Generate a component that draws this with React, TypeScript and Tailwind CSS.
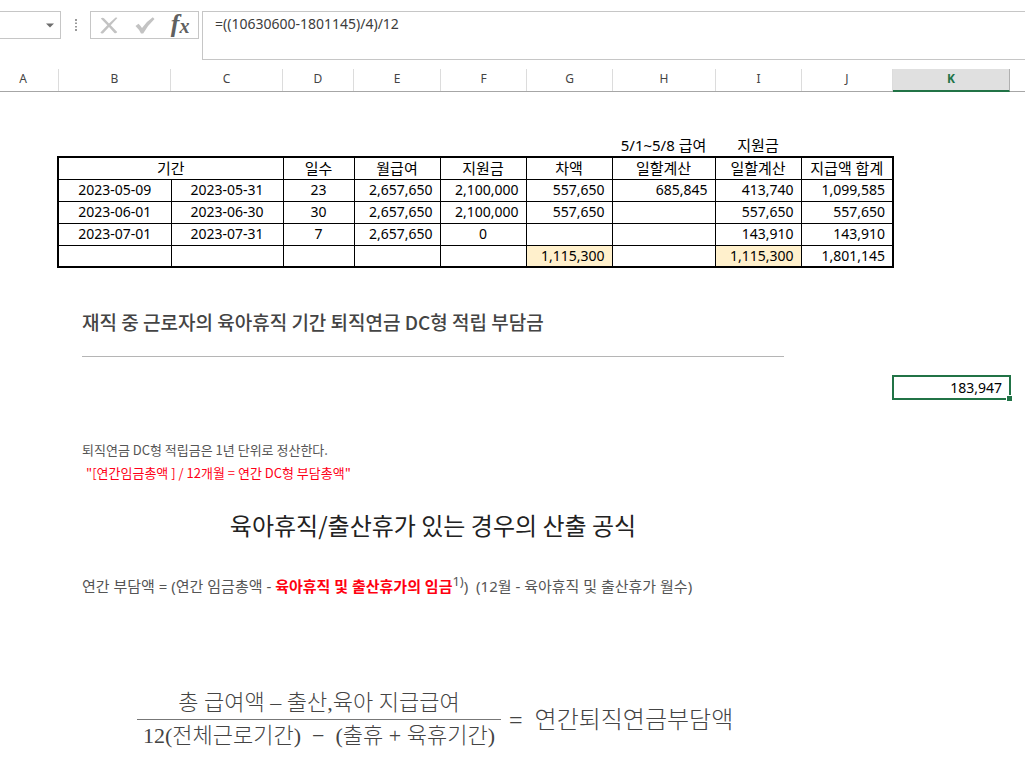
import React from "react";

type Column = { name: string; width: string };

const columns: Column[] = [
  { name: "A", width: "w-[59px] pr-3" },
  { name: "B", width: "w-[112px]" },
  { name: "C", width: "w-[112px]" },
  { name: "D", width: "w-[71px]" },
  { name: "E", width: "w-[87px]" },
  { name: "F", width: "w-[86px]" },
  { name: "G", width: "w-[86px]" },
  { name: "H", width: "w-[103px]" },
  { name: "I", width: "w-[86px]" },
  { name: "J", width: "w-[91px]" },
];

const rows: string[][] = [
  ["2023-05-09", "2023-05-31", "23", "2,657,650", "2,100,000", "557,650", "685,845", "413,740", "1,099,585"],
  ["2023-06-01", "2023-06-30", "30", "2,657,650", "2,100,000", "557,650", "", "557,650", "557,650"],
  ["2023-07-01", "2023-07-31", "7", "2,657,650", "0", "", "", "143,910", "143,910"],
  ["", "", "", "", "", "1,115,300", "", "1,115,300", "1,801,145"],
];

const headings = ["일수", "월급여", "지원금", "차액", "일할계산", "일할계산", "지급액 합계"];

function cellClass(value: string, row: number, col: number) {
  const align = col < 3 || value === "0" ? "text-center" : "text-right pr-[7px]";
  const fill = row === 3 && (col === 5 || col === 7) ? "bg-[#fff0cc]" : "";
  return `border border-black ${align} ${fill}`;
}

function FormulaBar() {
  return (
    <div className="flex items-start pt-[11px]">
      <div className="flex h-7 w-[61px] shrink-0 items-center border border-l-0 border-[#c6c6c6]">
        <input aria-label="이름 상자" className="min-w-0 flex-1 outline-none" />
        <button aria-label="이름 목록" className="flex h-full w-5 items-center justify-center">
          <svg width="8" height="5" viewBox="0 0 8 5" fill="#6d6d6d">
            <path d="M0 0.5h8L4 4.5z" />
          </svg>
        </button>
      </div>
      <div className="flex h-7 w-[29px] shrink-0 items-center justify-center">
        <svg width="2" height="12" viewBox="0 0 2 12" fill="#9a9a9a">
          <path d="M0 0h2v2H0zM0 3.5h2v1.500H0zM0 7h2v1.500H0zM0 10h2v2H0z" />
        </svg>
      </div>
      <div className="flex h-7 w-[109px] shrink-0 items-center border border-[#c6c6c6]">
        <button aria-label="취소" className="flex h-full w-9 items-center justify-center">
          <svg width="18" height="17" viewBox="0 0 18 17" fill="#c3c3c3">
            <path d="M0.800 1.500Q2.500 0 4.200 1.400L9 6.500L15.600 0.500Q17 0.100 17.400 1L10.700 8.200L17.200 15Q16 16.800 14.400 16L9 10.100L3.200 16.200Q1.300 17 0.400 15.600L7.300 8.200Z" />
          </svg>
        </button>
        <button aria-label="입력" className="flex h-full w-9 items-center justify-center">
          <svg width="20" height="17" viewBox="0 0 20 17" fill="#c3c3c3">
            <path d="M0.500 9L3.500 6.800Q5.500 8.500 7 11Q11.500 4.500 17.800 0.300L19.500 2Q13 8 8.200 16.500L6 16.500Q4 12.300 0.500 9Z" />
          </svg>
        </button>
        <button
          aria-label="함수 삽입"
          className="flex h-full w-9 items-center justify-center pb-0.5 font-['Liberation_Serif',serif] text-[#606060] italic"
        >
          <span className="text-[26px] leading-6 font-bold">f</span>
          <span className="pt-1 text-xl leading-6 font-bold">x</span>
        </button>
      </div>
      <textarea
        aria-label="수식 입력줄"
        defaultValue="=((10630600-1801145)/4)/12"
        className="ml-[3px] h-[49px] min-w-0 flex-1 resize-none overflow-hidden border border-r-0 border-[#c6c6c6] px-3 py-0.5 text-sm leading-5 text-[#3c3c3c] outline-none"
      />
    </div>
  );
}

function ColumnHeader() {
  return (
    <div className="mt-[9px] flex h-[23px] border-b border-[#a6a6a6] text-xs leading-[19px] text-[#444]">
      {columns.map((c) => (
        <div key={c.name} className={`shrink-0 border-r border-[#dcdcdc] text-center ${c.width}`}>
          {c.name}
        </div>
      ))}
      <div className="-mb-px w-[117px] shrink-0 border-r border-b-2 border-r-[#b0b0b0] border-b-[#217346] bg-[#e0e0e0] text-center font-bold text-[#217346]">
        K
      </div>
    </div>
  );
}

function PayTable() {
  return (
    <>
      <div className="mt-[42px] flex h-[22px] items-center text-[15px]">
        <div className="ml-[612px] w-[103px] text-center">5/1~5/8 급여</div>
        <div className="w-[86px] text-center">지원금</div>
      </div>
      <table className="ml-[57px] w-[837px] table-fixed border-collapse border-2 border-black text-sm leading-5">
        <colgroup>
          <col className="w-[113px]" />
          <col className="w-[112px]" />
          <col className="w-[71px]" />
          <col className="w-[86px]" />
          <col className="w-[86px]" />
          <col className="w-[86px]" />
          <col className="w-[103px]" />
          <col className="w-[86px]" />
          <col className="w-[92px]" />
        </colgroup>
        <thead>
          <tr className="h-[22px] text-[15px]">
            <th colSpan={2} className="border border-black font-normal">
              기간
            </th>
            {headings.map((h, i) => (
              <th key={i} className="border border-black font-normal whitespace-nowrap">
                {h}
              </th>
            ))}
          </tr>
        </thead>
        <tbody>
          {rows.map((row, r) => (
            <tr key={r} className="h-[22px]">
              {row.map((value, c) => (
                <td key={c} className={cellClass(value, r, c)}>
                  {value}
                </td>
              ))}
            </tr>
          ))}
        </tbody>
      </table>
    </>
  );
}

function Equation() {
  return (
    <div className="mt-[87px] ml-[55px] flex items-center font-['Liberation_Serif','Noto_Sans_CJK_KR',serif] text-[22px] leading-8 font-light whitespace-nowrap text-[#444]">
      <div className="text-center">
        <div className="border-b border-[#777] px-1">총 급여액 – 출산,육아 지급급여</div>
        <div className="px-[6px]">12(전체근로기간) &nbsp;−&nbsp; (출휴 + 육휴기간)</div>
      </div>
      <div className="ml-2 flex gap-3 text-2xl leading-8">
        <span>=</span>
        <span>연간퇴직연금부담액</span>
      </div>
    </div>
  );
}

function Notes() {
  return (
    <article className="w-[892px] shrink-0 pt-[39px] pl-[82px] font-['Noto_Sans_CJK_KR',sans-serif] text-[#555]">
      <h2 className="text-[19px] leading-[30px] font-medium text-[#444]">
        재직 중 근로자의 육아휴직 기간 퇴직연금 DC형 적립 부담금
      </h2>
      <hr className="mt-[19px] w-[702px] border-[#b5b5b5]" />
      <p className="mt-[81px] text-[13px] leading-[23px]">퇴직연금 DC형 적립금은 1년 단위로 정산한다.</p>
      <p className="pl-1 text-[13px] leading-[23px] text-[#ff0018]">
        "[연간임금총액 ] / 12개월 = 연간 DC형 부담총액"
      </p>
      <h3 className="mt-[23px] w-[702px] text-center text-2xl leading-9 text-[#222]">
        육아휴직/출산휴가 있는 경우의 산출 공식
      </h3>
      <p className="mt-[29px] font-['Noto_Sans','Noto_Sans_CJK_KR',sans-serif] text-[15px] leading-7">
        연간 부담액 = (연간 임금총액 - <strong className="text-[#ff0010]">육아휴직 및 출산휴가의 임금</strong>
        <sup className="text-[13px]">1)</sup>) &nbsp;(12월 - 육아휴직 및 출산휴가 월수)
      </p>
      <Equation />
    </article>
  );
}

export default function App() {
  return (
    <main className="min-h-screen overflow-hidden bg-white font-['Noto_Sans','Noto_Sans_CJK_KR',sans-serif] text-black">
      <FormulaBar />
      <ColumnHeader />
      <PayTable />
      <div className="flex items-start">
        <Notes />
        <div className="relative mt-[107px] h-[25px] w-[119px] shrink-0 border-2 border-[#217346] pr-[7px] text-right text-sm leading-[21px]">
          183,947
          <span className="absolute -right-[3px] -bottom-[3px] size-[6px] border-t border-l border-white bg-[#217346]" />
        </div>
      </div>
    </main>
  );
}
